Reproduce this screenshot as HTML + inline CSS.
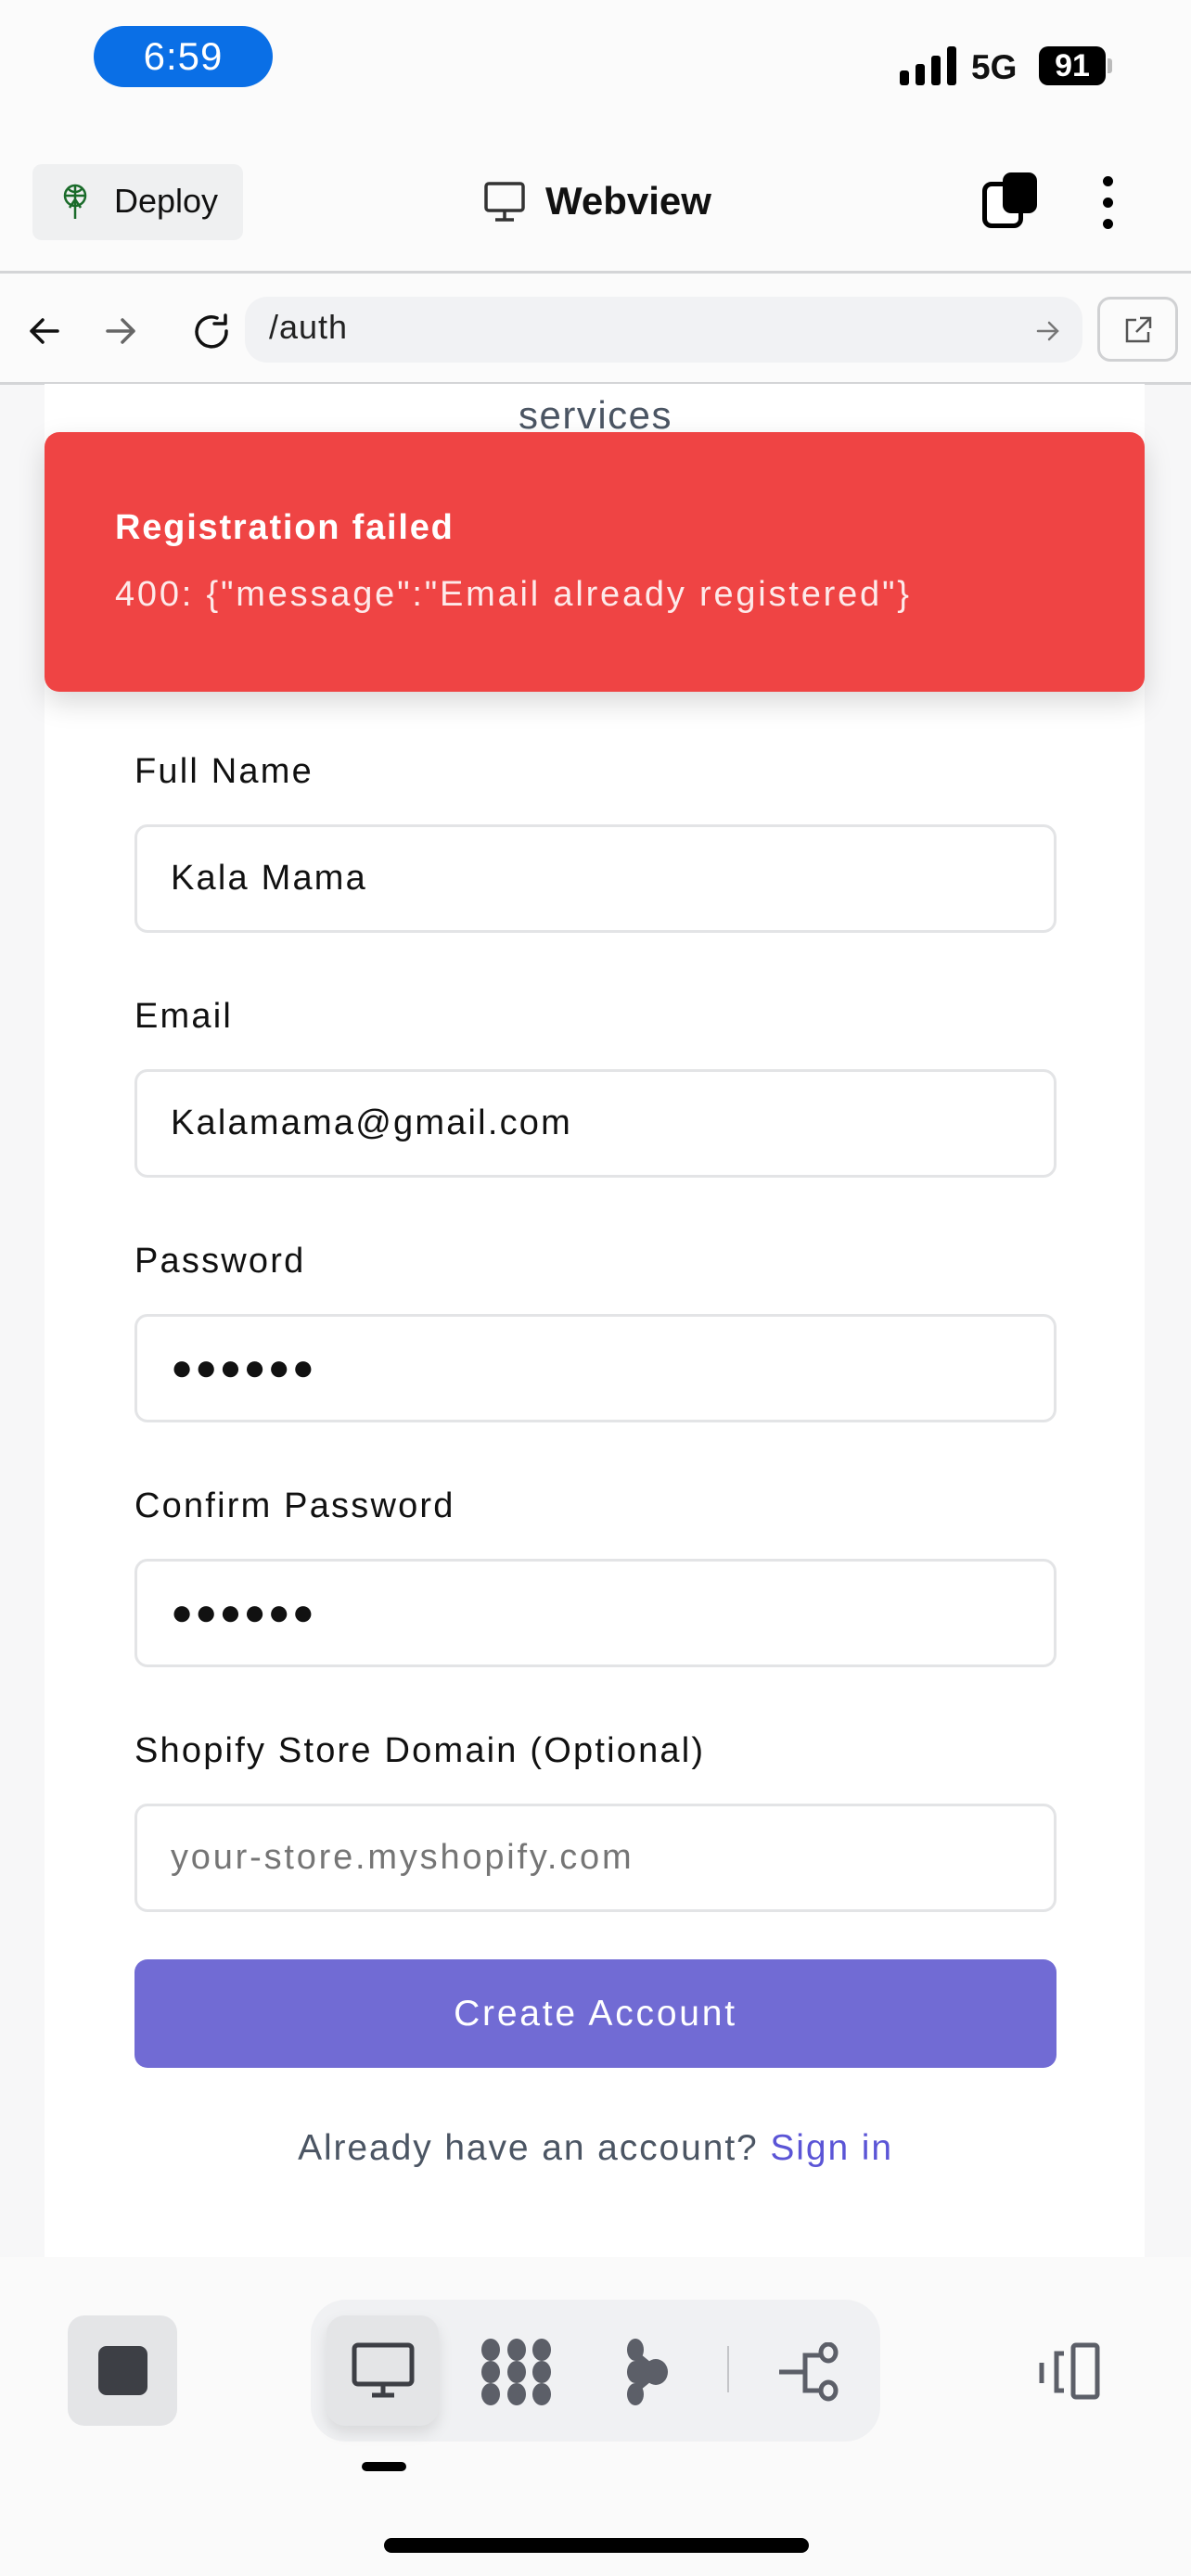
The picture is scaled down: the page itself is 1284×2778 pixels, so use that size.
<!DOCTYPE html>
<html><head><meta charset="utf-8"><style>
*{margin:0;padding:0;box-sizing:border-box}
body{width:1284px;height:2778px;background:#f7f7f8;font-family:"Liberation Sans",sans-serif;position:relative;overflow:hidden;color:#111}
.abs{position:absolute}
.top{left:0;top:0;width:1284px;height:414px;background:#fbfbfb}
.card{left:48px;top:414px;width:1186px;height:2040px;background:#fff;border-radius:0 0 20px 20px}
.lbl{position:absolute;left:145px;font-size:38px;color:#111;letter-spacing:2.2px}
.inp{position:absolute;left:145px;width:994px;height:117px;border:3px solid #e3e4e6;border-radius:14px;background:#fff;font-size:38px;padding-left:36px;line-height:111px;color:#111;letter-spacing:2.2px}
</style></head><body>
<div class="abs top"></div>
<div class="abs" style="left:101px;top:28px;width:193px;height:66px;background:#0a6fe6;border-radius:33px;color:#fff;font-size:42px;text-align:center;line-height:66px;letter-spacing:1px">6:59</div>
<svg class="abs" style="left:970px;top:50px" width="64" height="42"><rect x="0" y="26" width="10" height="16" rx="3"/><rect x="17" y="19" width="10" height="23" rx="3"/><rect x="34" y="10" width="10" height="32" rx="3"/><rect x="51" y="0" width="10" height="42" rx="3"/></svg>
<div class="abs" style="left:1047px;top:50px;font-size:37px;font-weight:bold;line-height:46px">5G</div>
<div class="abs" style="left:1120px;top:50px;width:72px;height:42px;background:#000;border-radius:10px;color:#fff;font-size:34px;font-weight:bold;text-align:center;line-height:42px">91</div>
<div class="abs" style="left:1194px;top:63px;width:5px;height:16px;background:#bbb;border-radius:0 3px 3px 0"></div>

<div class="abs" style="left:35px;top:177px;width:227px;height:82px;background:#eff0f1;border-radius:10px"></div>
<svg class="abs" style="left:66px;top:198px" width="30" height="40" viewBox="0 0 30 40" fill="none" stroke="#1a6b2a" stroke-width="2.5"><circle cx="15" cy="13" r="11"/><path d="M4 13h22M15 2v36M9 26l6-9 6 9M8 6c4 4 10 4 14 0"/></svg>
<div class="abs" style="left:123px;top:196px;font-size:36px;color:#111">Deploy</div>
<svg class="abs" style="left:522px;top:196px" width="46" height="44" fill="none" stroke="#333" stroke-width="3.5"><rect x="2" y="2" width="40" height="29" rx="3"/><path d="M22 31v9M12 41h20"/></svg>
<div class="abs" style="left:588px;top:193px;font-size:42px;font-weight:bold">Webview</div>
<div class="abs" style="left:1059px;top:196px;width:44px;height:50px;border:5px solid #000;border-radius:10px;background:#fff"></div>
<div class="abs" style="left:1081px;top:186px;width:37px;height:44px;background:#000;border-radius:9px"></div>
<div class="abs" style="left:1189px;top:190px;width:11px;height:11px;background:#000;border-radius:50%"></div>
<div class="abs" style="left:1189px;top:213px;width:11px;height:11px;background:#000;border-radius:50%"></div>
<div class="abs" style="left:1189px;top:236px;width:11px;height:11px;background:#000;border-radius:50%"></div>

<div class="abs" style="left:0;top:292px;width:1284px;height:3px;background:#d4d5d7"></div>
<svg class="abs" style="left:30px;top:337px" width="250" height="44" fill="none" stroke-width="3.5" stroke-linecap="round" stroke-linejoin="round"><path stroke="#111" d="M4 20h28M16 8L4 20l12 12"/><path stroke="#666" d="M86 20h28M102 8l12 12-12 12"/><path stroke="#111" d="M204 6a16 16 0 1 0 10 14"/><path stroke="#111" d="M201 6h12V-3" transform="translate(0,6)"/></svg>
<div class="abs" style="left:264px;top:320px;width:903px;height:71px;background:#f1f2f4;border-radius:24px"></div>
<div class="abs" style="left:290px;top:332px;font-size:36px;color:#222;letter-spacing:1px">/auth</div>
<svg class="abs" style="left:1116px;top:343px" width="28" height="28" fill="none" stroke="#777" stroke-width="2.5" stroke-linecap="round"><path d="M3 14h21M15 5l9 9-9 9"/></svg>
<div class="abs" style="left:1183px;top:320px;width:87px;height:70px;border:3px solid #d0d1d3;border-radius:14px;background:#fbfbfb"></div>
<svg class="abs" style="left:1211px;top:340px" width="32" height="32" fill="none" stroke="#555" stroke-width="2.5"><path d="M14 5H4v23h23V18M18 3h11v11M29 3L14 18"/></svg>
<div class="abs" style="left:0;top:412px;width:1284px;height:3px;background:#d4d5d7"></div>

<div class="abs card"></div>
<div class="abs" style="left:0;top:418px;width:1284px;text-align:center;font-size:42px;color:#4b5563;line-height:60px;letter-spacing:1.5px">services</div>

<div class="abs" style="left:48px;top:466px;width:1186px;height:280px;background:#ef4444;border-radius:16px;box-shadow:0 12px 30px rgba(0,0,0,0.15)"></div>
<div class="abs" style="left:124px;top:548px;font-size:38px;font-weight:bold;color:#fff;letter-spacing:1.8px">Registration failed</div>
<div class="abs" style="left:124px;top:620px;font-size:38px;color:#fdeaea;letter-spacing:2.8px">400: {"message":"Email already registered"}</div>

<div class="lbl" style="top:811px">Full Name</div>
<div class="inp" style="top:889px">Kala Mama</div>
<div class="lbl" style="top:1075px">Email</div>
<div class="inp" style="top:1153px">Kalamama@gmail.com</div>
<div class="lbl" style="top:1339px">Password</div>
<div class="inp" style="top:1417px;font-size:40px;letter-spacing:2px">●●●●●●</div>
<div class="lbl" style="top:1603px">Confirm Password</div>
<div class="inp" style="top:1681px;font-size:40px;letter-spacing:2px">●●●●●●</div>
<div class="lbl" style="top:1867px">Shopify Store Domain (Optional)</div>
<div class="inp" style="top:1945px;color:#757575;letter-spacing:2.8px">your-store.myshopify.com</div>
<div class="abs" style="left:145px;top:2113px;width:994px;height:117px;background:#716bd4;border-radius:14px;color:#fff;font-size:39px;text-align:center;line-height:117px;letter-spacing:2.8px">Create Account</div>
<div class="abs" style="left:0;top:2295px;width:1284px;text-align:center;font-size:39px;color:#4b5563;letter-spacing:1.9px">Already have an account? <span style="color:#5b55d6">Sign in</span></div>

<div class="abs" style="left:0;top:2434px;width:1284px;height:344px;background:#fafafa"></div>
<div class="abs" style="left:73px;top:2497px;width:118px;height:119px;background:#e4e5e7;border-radius:18px"></div>
<div class="abs" style="left:106px;top:2530px;width:53px;height:53px;background:#3d3f45;border-radius:9px"></div>
<div class="abs" style="left:335px;top:2480px;width:614px;height:153px;background:#f0f1f3;border-radius:38px"></div>
<div class="abs" style="left:352px;top:2497px;width:121px;height:119px;background:#e4e5e7;border-radius:20px;box-shadow:0 8px 16px rgba(0,0,0,0.1)"></div>
<svg class="abs" style="left:379px;top:2526px" width="68" height="62" fill="none" stroke="#3d3f45" stroke-width="5"><rect x="3" y="3" width="62" height="42" rx="4"/><path d="M34 45v10M22 57h24"/></svg>
<svg class="abs" style="left:518px;top:2522px" width="78" height="72" fill="#5c5f68"><ellipse cx="11" cy="12" rx="10" ry="12"/><ellipse cx="39" cy="12" rx="10" ry="12"/><ellipse cx="66" cy="12" rx="10" ry="12"/><ellipse cx="11" cy="36" rx="10" ry="12"/><ellipse cx="39" cy="36" rx="10" ry="12"/><ellipse cx="66" cy="36" rx="10" ry="12"/><ellipse cx="11" cy="60" rx="10" ry="12"/><ellipse cx="39" cy="60" rx="10" ry="12"/><ellipse cx="66" cy="60" rx="10" ry="12"/></svg>
<svg class="abs" style="left:675px;top:2522px" width="50" height="72" fill="#5c5f68"><ellipse cx="10" cy="12" rx="9" ry="12"/><ellipse cx="10" cy="36" rx="9" ry="12"/><ellipse cx="10" cy="60" rx="9" ry="12"/><ellipse cx="32" cy="36" rx="13" ry="14"/><path d="M10 12L32 30V42L10 60z"/></svg>
<div class="abs" style="left:784px;top:2530px;width:2px;height:50px;background:#c4c5c8"></div>
<svg class="abs" style="left:838px;top:2526px" width="70" height="64" fill="none" stroke="#5c5f68" stroke-width="5"><ellipse cx="55" cy="11" rx="8" ry="9"/><ellipse cx="55" cy="52" rx="8" ry="9"/><path d="M2 32h28M47 14H30v38h17"/></svg>
<svg class="abs" style="left:1117px;top:2526px" width="70" height="64" fill="none" stroke="#5c5f68" stroke-width="5"><rect x="40" y="3" width="26" height="56" rx="3"/><path d="M30 12h-8v40h8M6 22v22"/></svg>
<div class="abs" style="left:390px;top:2655px;width:48px;height:10px;background:#000;border-radius:5px"></div>
<div class="abs" style="left:414px;top:2737px;width:458px;height:16px;background:#000;border-radius:8px"></div>
</body></html>
